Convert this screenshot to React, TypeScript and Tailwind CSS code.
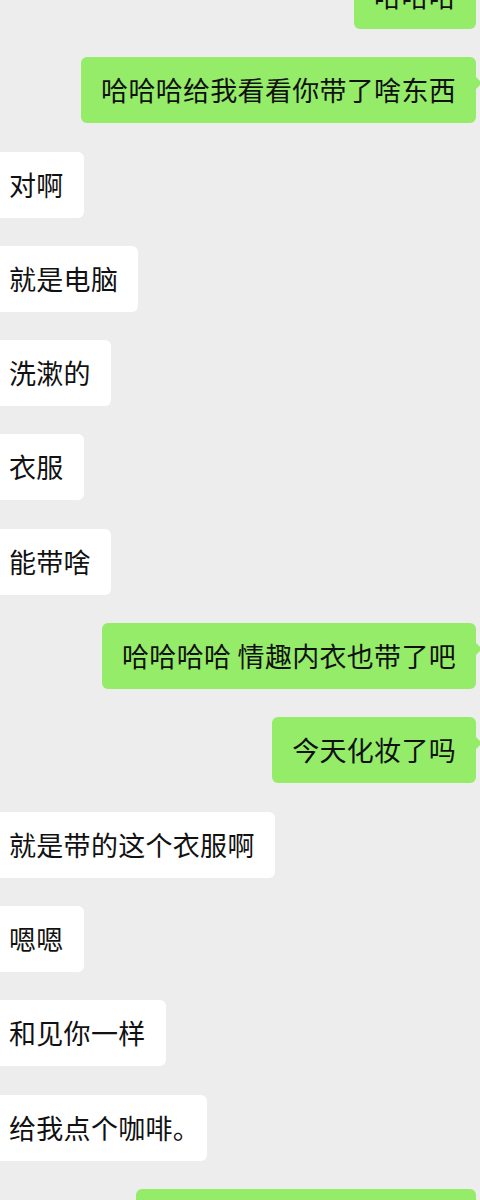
type Msg = { me: boolean; text: string };

const messages: Msg[] = [
  { me: true, text: '哈哈哈' },
  { me: true, text: '哈哈哈给我看看你带了啥东西' },
  { me: false, text: '对啊' },
  { me: false, text: '就是电脑' },
  { me: false, text: '洗漱的' },
  { me: false, text: '衣服' },
  { me: false, text: '能带啥' },
  { me: true, text: '哈哈哈哈 情趣内衣也带了吧' },
  { me: true, text: '今天化妆了吗' },
  { me: false, text: '就是带的这个衣服啊' },
  { me: false, text: '嗯嗯' },
  { me: false, text: '和见你一样' },
  { me: false, text: '给我点个咖啡。' },
  { me: true, text: '好呀我现在就给你点一杯' },
];

function Bubble({ me, text }: Msg) {
  if (me) {
    return (
      <div className="flex justify-end pr-[4px]">
        <div className="relative rounded-[6px] bg-[#95ec69] px-[20px] py-[18px] whitespace-nowrap">
          {text}
          {/* little tail on the right */}
          <span className="absolute right-[-6px] top-[19px] h-0 w-0 border-y-[7px] border-l-[7px] border-y-transparent border-l-[#95ec69]" />
        </div>
      </div>
    );
  }
  return (
    <div className="flex justify-start">
      <div className="-ml-[11px] rounded-[6px] bg-white px-[20px] py-[18px] whitespace-nowrap [font-feature-settings:'halt']">
        {text}
      </div>
    </div>
  );
}

export default function App() {
  return (
    <div className="h-[1200px] w-[480px] overflow-hidden bg-[#ededed]">
      <div
        className="-mt-[37px] flex flex-col gap-[28.3px] text-[27px] leading-[30px] tracking-[0.3px] text-[#111111]"
        style={{ fontFamily: '"Noto Sans CJK SC", "Noto Sans", sans-serif' }}
      >
        {messages.map((m, i) => (
          <Bubble key={i} {...m} />
        ))}
      </div>
    </div>
  );
}
